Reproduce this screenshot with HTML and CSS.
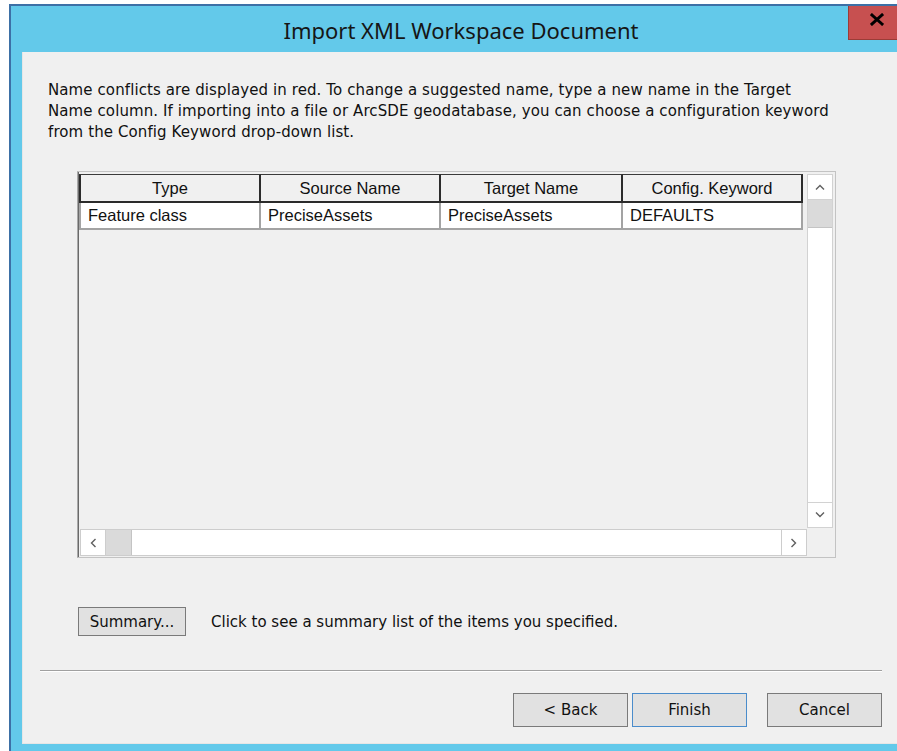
FILE: index.html
```html
<!DOCTYPE html>
<html lang="en">
<head>
<meta charset="utf-8">
<title>Import XML Workspace Document</title>
<link rel="stylesheet" href="styles.css">
</head>
<body>
<div class="window">
  <div class="titlebar">
    <span class="tb-spacer"></span>
    <h1 class="title">Import XML Workspace Document</h1>
    <button class="close" aria-label="Close">
      <svg width="14" height="13" viewBox="0 0 14 13"><path d="M2 2 L12 11 M12 2 L2 11" stroke="#000" stroke-width="3" stroke-linecap="square" fill="none"/></svg>
    </button>
  </div>
  <div class="client">
    <p class="intro">Name conflicts are displayed in red. To change a suggested name, type a new name in the Target<br>Name column. If importing into a file or ArcSDE geodatabase, you can choose a configuration keyword<br>from the Config Keyword drop-down list.</p>

    <div class="listview">
      <div class="lv-main">
        <div class="lv-body">
          <div class="lv-row lv-head">
            <div class="cell">Type</div>
            <div class="cell">Source Name</div>
            <div class="cell">Target Name</div>
            <div class="cell">Config. Keyword</div>
          </div>
          <div class="lv-row lv-data">
            <div class="cell">Feature class</div>
            <div class="cell">PreciseAssets</div>
            <div class="cell">PreciseAssets</div>
            <div class="cell">DEFAULTS</div>
          </div>
        </div>
        <div class="vscroll">
          <div class="sb-btn">
            <svg width="10" height="6" viewBox="0 0 10 6"><polyline points="1,5.5 5,1.5 9,5.5" fill="none" stroke="#5f5f5f" stroke-width="1.4"/></svg>
          </div>
          <div class="sb-thumb"></div>
          <div class="sb-track"></div>
          <div class="sb-btn">
            <svg width="10" height="6" viewBox="0 0 10 6"><polyline points="1,0.5 5,4.5 9,0.5" fill="none" stroke="#5f5f5f" stroke-width="1.4"/></svg>
          </div>
        </div>
      </div>
      <div class="lv-bottom">
        <div class="hscroll">
          <div class="sb-btn">
            <svg width="6" height="10" viewBox="0 0 6 10"><polyline points="5.5,1 1.5,5 5.5,9" fill="none" stroke="#5f5f5f" stroke-width="1.4"/></svg>
          </div>
          <div class="sb-thumb"></div>
          <div class="sb-track"></div>
          <div class="sb-btn">
            <svg width="6" height="10" viewBox="0 0 6 10"><polyline points="0.5,1 4.5,5 0.5,9" fill="none" stroke="#5f5f5f" stroke-width="1.4"/></svg>
          </div>
        </div>
        <div class="corner"></div>
      </div>
    </div>

    <div class="summary-row">
      <button class="btn summary">Summary...</button>
      <span class="summary-text">Click to see a summary list of the items you specified.</span>
    </div>

    <div class="separator"></div>

    <div class="actions">
      <button class="btn">&lt; Back</button>
      <button class="btn default">Finish</button>
      <button class="btn cancel">Cancel</button>
    </div>
  </div>
</div>
</body>
</html>
```

FILE: styles.css
```css
* { box-sizing: border-box; }

html, body {
  margin: 0;
  padding: 0;
}

body {
  width: 897px;
  height: 751px;
  overflow: hidden;
  background: #ffffff;
  font-family: "DejaVu Sans", sans-serif;
  font-size: 15px;
  color: #111;
}

/* dialog frame */
.window {
  margin: 4px 0 0 9px;
  width: 904px;
  height: 760px;
  background: #63c9ea;
  border: 2px solid #3d70a6;
  padding: 0 10px 0 11px;
  display: flex;
  flex-direction: column;
}

.titlebar {
  margin: 0 -10px 0 -11px;
  height: 46px;
  display: grid;
  grid-template-columns: 1fr auto 1fr;
  align-items: start;
}

.title {
  margin: 0;
  padding-top: 11px;
  font-family: "Noto Sans", "Open Sans", sans-serif;
  font-weight: normal;
  font-size: 22px;
  line-height: 26px;
  color: #161616;
  white-space: nowrap;
}

.close {
  justify-self: end;
  margin: 0 5px 0 0;
  width: 58px;
  height: 34px;
  padding: 0 0 6px 0;
  background: #c75050;
  border: 1px solid #9b3c37;
  border-top: none;
  display: flex;
  align-items: center;
  justify-content: center;
}

/* client area */
.client {
  flex: none;
  height: 692px;
  background: #f0f0f0;
  border-left: 1px solid #e6e6e6;
  border-bottom: 1px solid #e6e6e6;
  display: flex;
  flex-direction: column;
  align-items: flex-start;
}

.intro {
  margin: 28px 0 0 25px;
  line-height: 21px;
  letter-spacing: 0.1px;
  white-space: nowrap;
}

/* list view */
.listview {
  margin: 28px 0 0 54px;
  width: 759px;
  height: 387px;
  border: 1px solid #c3c3c3;
  border-left-color: #a9a9a9;
  box-shadow: inset 1px 0 0 #6a6a6a;
  padding: 2px 1px 1px 1px;
  display: flex;
  flex-direction: column;
}

.lv-main {
  height: 355px;
  display: flex;
}

.lv-body {
  flex: 1;
}

.lv-row {
  display: grid;
  grid-template-columns: 182px 180px 182px 180px;
  font-family: "Liberation Sans", Arial, sans-serif;
  font-size: 16.5px;
}

.lv-head {
  height: 29px;
}

.lv-head .cell {
  background: #f0f0f0;
  border-top: 1px solid #3a3a3a;
  border-right: 2px solid #2b2b2b;
  border-bottom: 2px solid #2b2b2b;
  text-align: center;
  line-height: 26px;
  color: #111;
}

.lv-head .cell:first-child {
  border-left: 2px solid #2b2b2b;
}

.lv-data {
  height: 27px;
}

.lv-data .cell {
  background: #fff;
  border-right: 2px solid #a3a3a3;
  border-bottom: 2px solid #a3a3a3;
  padding-left: 7px;
  line-height: 25px;
  color: #111;
}

.lv-data .cell:first-child {
  border-left: 2px solid #a3a3a3;
}

.vscroll {
  width: 26px;
  margin-right: 1px;
  margin-bottom: 1px;
  display: flex;
  flex-direction: column;
  border: 1px solid #d2d2d2;
  background: #fff;
}

.sb-btn {
  flex: none;
  width: 24px;
  height: 24px;
  display: flex;
  align-items: center;
  justify-content: center;
  background: #fff;
}

.vscroll .sb-btn:first-child {
  border-bottom: 1px solid #d2d2d2;
  height: 25px;
}

.vscroll .sb-btn:last-child {
  border-top: 1px solid #d2d2d2;
  height: 25px;
}

.vscroll .sb-thumb {
  flex: none;
  height: 28px;
  background: #dadada;
  border-bottom: 1px solid #c4c4c4;
}

.sb-track {
  flex: 1;
  background: #fff;
}

.lv-bottom {
  height: 27px;
  display: flex;
}

.hscroll {
  margin-left: 1px;
  width: 727px;
  height: 27px;
  display: flex;
  border: 1px solid #cdcdcd;
  background: #fff;
}

.hscroll .sb-btn {
  width: 25px;
  height: 25px;
}

.hscroll .sb-btn:first-child {
  border-right: 1px solid #cdcdcd;
}

.hscroll .sb-btn:last-child {
  border-left: 1px solid #cdcdcd;
}

.hscroll .sb-thumb {
  flex: none;
  width: 26px;
  background: #dadada;
  border-right: 1px solid #c4c4c4;
}

.corner {
  flex: 1;
  background: #f0f0f0;
}

/* buttons */
.btn {
  font-family: "DejaVu Sans", sans-serif;
  font-size: 15px;
  color: #111;
  background: #e1e1e1;
  border: 1px solid #7a7a7a;
  padding: 0;
}

.summary-row {
  margin: 49px 0 0 55px;
  display: flex;
  align-items: center;
  gap: 25px;
}

.summary {
  width: 108px;
  height: 29px;
}

.separator {
  margin: 34px 0 0 17px;
  width: 842px;
  border-top: 1px solid #a0a0a0;
  border-bottom: 1px solid #ffffff;
}

.actions {
  margin: 21px 0 0 17px;
  width: 842px;
  display: flex;
  justify-content: flex-end;
  gap: 4px;
}

.actions .btn {
  width: 115px;
  height: 34px;
}

.actions .default {
  border-color: #4a8ccb;
}

.actions .cancel {
  margin-left: 16px;
}
```
